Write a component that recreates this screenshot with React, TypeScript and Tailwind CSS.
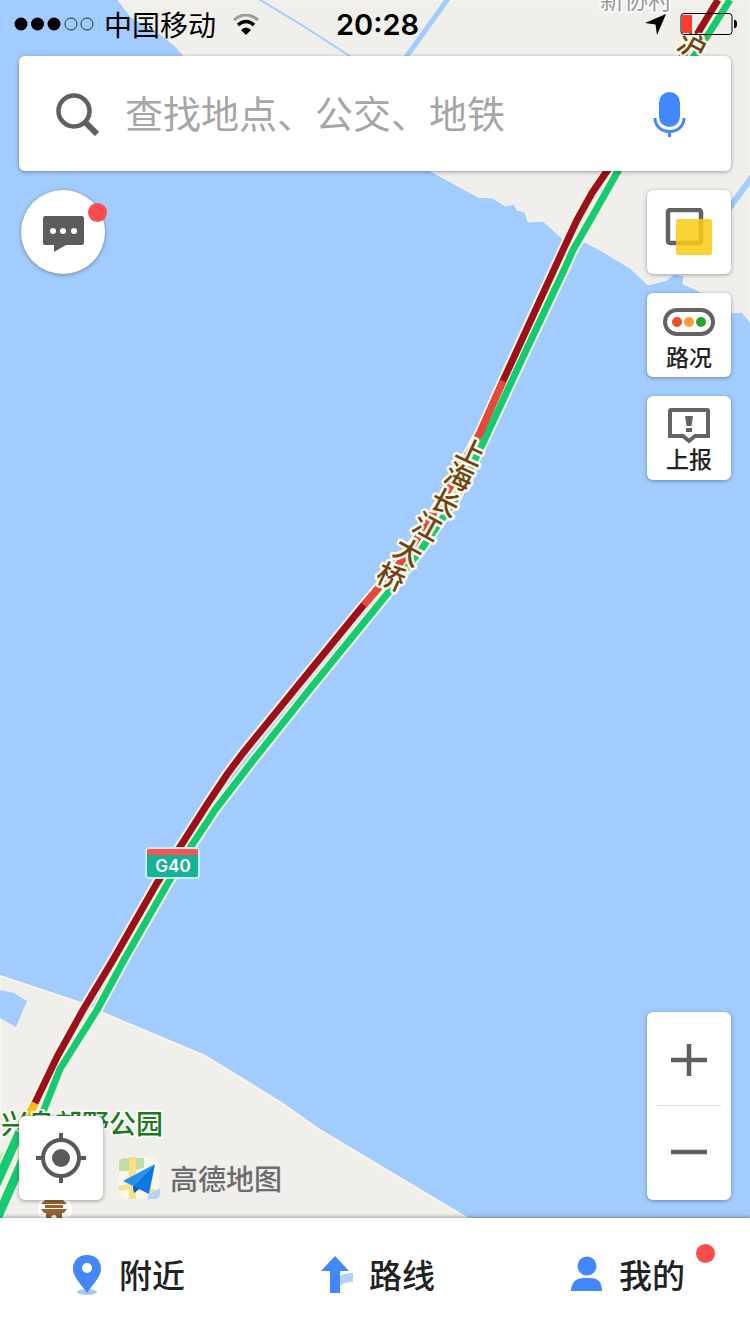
import type { ReactNode } from "react";

const bridgeLabel = [
  { char: "上", x: 471, y: 452, angle: 25 },
  { char: "海", x: 459, y: 477, angle: 25 },
  { char: "长", x: 445, y: 503, angle: 27 },
  { char: "江", x: 427, y: 527, angle: 29 },
  { char: "大", x: 408, y: 552, angle: 29 },
  { char: "桥", x: 391, y: 577, angle: 24 },
];

const redRoad =
  "M718 0 L696 36 L607 171 L592 193 L577 220 L563 250 L503 381 L480 433 L450 487 L423 530 L400 563 L375 592 L362 607 L300 683 L243 753 L228 773 L208 803 L180 847 L157 883 L113 960 L83 1010 L57 1057 L35 1103 L30 1113";
const greenRoad =
  "M730 0 L706 38 L618 171 L588 224 L573 250 L565 268 L523 357 L483 443 L455 500 L423 547 L388 593 L310 689 L255 758 L215 810 L192 845 L168 883 L124 960 L97 1010 L60 1069 L43 1112";

function MapCanvas() {
  return (
    <svg
      className="absolute inset-0 h-full w-full"
      viewBox="0 0 750 1218"
      preserveAspectRatio="xMidYMin slice"
      fontFamily="'Noto Sans CJK SC', sans-serif"
      aria-hidden="true"
    >
      <rect width="750" height="1218" fill="#a2ccfe" />

      {/* north shore */}
      <path
        d="M118 0 L131 17 L160 34 L175 46 L184 56 L260 90 L425 168 L478 197 L493 198 L505 206 L514 204 L517 210 L525 212 L528 222 L543 221 L563 239 L583 241 L600 250 L630 268 L648 285 L667 280 L674 274 L684 276 L683 284 L697 290 L732 313 L742 312 L750 322 V0 Z"
        fill="#f1efeb"
        stroke="#f8f5ea"
        strokeWidth="1"
      />
      {/* south shore */}
      <path
        d="M0 976 L75 1001 L103 1013 L205 1056 L280 1102 L320 1130 L467 1218 H0 Z"
        fill="#f1efeb"
        stroke="#f8f5ea"
        strokeWidth="2"
      />
      <path d="M0 990 L14 993 L27 1001 L16 1027 L0 1018 Z" fill="#a2ccfe" />
      <path d="M0 1154 L6 1150 V1165 L0 1170 Z" fill="#c6e6b4" />

      <g fill="none" stroke="#a2ccfe">
        <path d="M257 -2 L300 24 L356 60" strokeWidth="2" />
        <path d="M450 -4 L404 60" strokeWidth="5" />
        <path d="M754 174 L728 210" strokeWidth="6" />
      </g>

      <text x="600" y="9" fontSize="24" fill="#999" stroke="#fff" strokeWidth="3" paintOrder="stroke">
        新协村
      </text>

      <g fill="none" strokeLinejoin="round">
        <path d={greenRoad} stroke="#f8f5e0" strokeWidth="11" />
        <path d={redRoad} stroke="#f8f5e0" strokeWidth="11" />
        <path d={greenRoad} stroke="#14cb72" strokeWidth="7" />
        <path d={redRoad} stroke="#9b101a" strokeWidth="7" />
        <path
          d="M503 381 L480 433 L450 487 L423 530 L400 563 L375 592 L364 605"
          stroke="#e8483c"
          strokeWidth="7"
        />
        <path d="M35 1103 L28 1117" stroke="#fcbf10" strokeWidth="7" />
        <path d="M26 1118 L-10 1198 M34 1135 L-8 1230" stroke="#f8f5e0" strokeWidth="13" />
        <path d="M26 1118 L-10 1198 M34 1135 L-8 1230" stroke="#14cb72" strokeWidth="9" />
      </g>

      <g
        fontSize="28"
        fontWeight="500"
        fill="#6b4417"
        stroke="#fdf8e8"
        strokeWidth="5"
        strokeLinejoin="round"
        paintOrder="stroke"
        textAnchor="middle"
      >
        <text transform="translate(692 46) rotate(28)" y="10">
          沪
        </text>
        {bridgeLabel.map(({ char, x, y, angle }) => (
          <text key={char} transform={`translate(${x} ${y}) rotate(${angle})`} y="10">
            {char}
          </text>
        ))}
      </g>

      {/* highway shield */}
      <rect x="145" y="847" width="55" height="32" rx="4" fill="#c4eef0" />
      <rect x="147" y="849" width="51" height="28" rx="2" fill="#17b295" />
      <path d="M147 855 V851 Q147 849 149 849 H196 Q198 849 198 851 V855 Z" fill="#fb5351" />
      <text
        x="173"
        y="872"
        fontSize="17"
        fontWeight="600"
        fontFamily="Inter, sans-serif"
        fill="#fff"
        textAnchor="middle"
      >
        G40
      </text>

      <text
        x="163"
        y="1134"
        fontSize="27"
        fontWeight="500"
        fill="#1c7a1c"
        stroke="#fff"
        strokeWidth="3"
        paintOrder="stroke"
        textAnchor="end"
      >
        兴岛郊野公园
      </text>

      {/* temple marker */}
      <circle cx="55" cy="1209" r="17" fill="#fff" />
      <path
        d="M46 1199 H62 L67 1204 H41 Z M45 1205 H63 V1208 H45 Z M41 1209 H67 L64 1213 H44 Z M46 1213 H62 V1220 H57 Q57 1215 54 1215 Q51 1215 51 1220 H46 Z"
        fill="#966234"
      />
    </svg>
  );
}

function StatusBar() {
  return (
    <div className="grid h-12 grid-cols-[1fr_auto_1fr] items-center pl-3.5 pr-[13px] text-black">
      <div className="flex items-center">
        <svg className="h-3.5 w-20" viewBox="0 0 80 14" aria-label="信号">
          <circle cx="7" cy="7" r="6.500" />
          <circle cx="23.500" cy="7" r="6.500" />
          <circle cx="40" cy="7" r="6.500" />
          <g fill="none" stroke="#000" strokeOpacity="0.75">
            <circle cx="57" cy="7" r="6" />
            <circle cx="73" cy="7" r="6" />
          </g>
        </svg>
        <span className="ml-2.5 text-[28px] leading-none">中国移动</span>
        <svg className="ml-4 h-[21px] w-7" viewBox="0 0 28 21" fill="none" aria-label="Wi-Fi">
          <path d="M2 6 Q14 -4 26 6" stroke="#9b9b9b" strokeWidth="3" />
          <path d="M6 11 Q14 4 22 11" stroke="#000" strokeWidth="3.500" />
          <path d="M9 16 Q14 11 19 16 L14 21 Z" fill="#000" />
        </svg>
      </div>
      <span className="pl-1 font-[Inter,sans-serif] text-[29px] leading-none font-semibold">20:28</span>
      <div className="flex items-center justify-end gap-3.5">
        <svg className="h-[21px] w-[21px]" viewBox="0 0 21 21" aria-label="定位服务">
          <path d="M21 0 L12 21 L10.5 10.5 L0 9 Z" />
        </svg>
        <svg className="h-6 w-[57px]" viewBox="0 0 57 24" aria-label="电量低">
          <rect x="1" y="1.5" width="51" height="21" rx="3" fill="none" stroke="#000" />
          <rect x="2" y="3" width="10" height="18" rx="1" fill="#ff3b30" />
          <path d="M54 8 H55 Q57 8 57 12 Q57 16 55 16 H54 Z" />
        </svg>
      </div>
    </div>
  );
}

function SearchBar() {
  return (
    <form className="mx-[19px] mt-2 flex h-[115px] items-center rounded-md bg-white pr-11 pl-9 shadow-[0_1px_4px_rgba(0,0,0,0.35)]">
      <svg className="h-[44px] w-[44px] shrink-0" viewBox="0 0 44 44" fill="none" stroke="#606060">
        <circle cx="19" cy="19" r="15.500" strokeWidth="4.500" />
        <path d="M30 30 L42 42" strokeWidth="6" />
      </svg>
      <input
        type="search"
        aria-label="搜索"
        placeholder="查找地点、公交、地铁"
        className="ml-[26px] min-w-0 flex-1 bg-transparent pb-1 text-[38px] outline-none placeholder:text-[#a6a6a6]"
      />
      <button type="button" aria-label="语音搜索">
        <svg className="h-[46px] w-[36px]" viewBox="0 0 36 46" fill="none">
          <rect x="8" y="1" width="21" height="35" rx="10.500" fill="#4287fc" />
          <path d="M4 27 C4 45 33 45 33 27 M18.500 40 V46" stroke="#4287fc" strokeWidth="3" />
        </svg>
      </button>
    </form>
  );
}

function MapButton({ label, children }: { label: string; children: ReactNode }) {
  return (
    <button
      type="button"
      aria-label={label}
      className="flex h-[84px] w-[84px] flex-col items-center justify-center rounded-md bg-white text-[#222] shadow-[0_1px_4px_rgba(0,0,0,0.35)]"
    >
      {children}
    </button>
  );
}

function SideTools() {
  return (
    <div className="flex flex-col gap-[19px]">
      <MapButton label="图层">
        <svg className="h-12 w-12" viewBox="0 0 48 48">
          <rect x="3" y="2" width="33" height="33" rx="2" fill="none" stroke="#636363" strokeWidth="4.500" />
          <rect x="11" y="11" width="36" height="36" rx="2" fill="#fccb14" fillOpacity="0.85" />
        </svg>
      </MapButton>
      <MapButton label="路况">
        <svg className="mt-2 h-7 w-[52px]" viewBox="0 0 52 28">
          <rect x="2" y="2" width="48" height="24" rx="12" fill="#fff" stroke="#636363" strokeWidth="4" />
          <circle cx="14" cy="14" r="5" fill="#f04a2c" />
          <circle cx="26" cy="14" r="5" fill="#fd9c35" />
          <circle cx="38" cy="14" r="5" fill="#1fa82c" />
        </svg>
        <span className="mt-1.5 text-[23px] leading-7 font-medium">路况</span>
      </MapButton>
      <MapButton label="上报">
        <svg className="mt-1 h-9 w-[42px]" viewBox="0 0 42 36">
          <path
            d="M3 2 H39 Q40 2 40 3 V28 H27 L21 33 L15 28 H2 V3 Q2 2 3 2 Z"
            fill="#fff"
            stroke="#636363"
            strokeWidth="4"
          />
          <path d="M17 8 H25 L23.5 18 H18.5 Z M18 20 H24 V24 H18 Z" fill="#636363" />
        </svg>
        <span className="text-[23px] leading-7 font-medium">上报</span>
      </MapButton>
    </div>
  );
}

function BrandMark() {
  return (
    <div className="flex items-center gap-2.5">
      <svg className="h-11 w-[41px]" viewBox="0 0 41 44" aria-hidden="true">
        <rect x="0" y="1" width="40" height="42" rx="7" fill="#f8f6ef" />
        <path d="M0 15 V7 Q0 2 6 2 H25 V12 Q12 16 0 15 Z" fill="#bddfa6" />
        <path d="M10 1 H17 V43 H10 Z M0 30 L14 27 L41 35 V39 L14 32 L0 35 Z" fill="#fbdf86" />
        <path d="M30 38 L41 32 V37 Q41 43 35 43 H28 Z" fill="#b4d4fa" />
        <path d="M36 8 L4 25 L14 30 Z" fill="#2590f0" />
        <path d="M36 8 L14 30 L15 37 L20 33 L30 38 Z" fill="#0a78e4" />
        <path d="M14 30 L15 37 L20 33 Z" fill="#075cc0" />
      </svg>
      <span className="text-[28px] leading-none font-medium text-[#6c6c70]">高德地图</span>
    </div>
  );
}

function ZoomControl() {
  return (
    <div className="flex w-[84px] flex-col rounded-md bg-white shadow-[0_1px_4px_rgba(0,0,0,0.35)]">
      <button type="button" aria-label="放大" className="flex h-[93px] items-center justify-center pt-0.5">
        <svg className="h-9 w-9" viewBox="0 0 36 36" stroke="#5f5f5f" strokeWidth="4.500">
          <path d="M0 18 H36 M18 2 V34" />
        </svg>
      </button>
      <div className="mx-2.5 h-px bg-[#ddd]" />
      <button type="button" aria-label="缩小" className="flex h-[94px] items-center justify-center pb-0.5">
        <svg className="h-9 w-9" viewBox="0 0 36 36" stroke="#5f5f5f" strokeWidth="4.500">
          <path d="M0 18 H36" />
        </svg>
      </button>
    </div>
  );
}

function NavItem({ label, icon, badge }: { label: string; icon: ReactNode; badge?: boolean }) {
  return (
    <button type="button" className="relative flex items-center justify-center gap-4 pl-1.5">
      <svg className="h-10 w-8" viewBox="0 0 32 40" aria-hidden="true">
        {icon}
      </svg>
      <span className="text-[33px] leading-none font-medium">{label}</span>
      {badge && <span className="absolute top-[26px] right-[35px] h-[19px] w-[19px] rounded-full bg-[#fc4c4c]" />}
    </button>
  );
}

function BottomNav() {
  return (
    <nav className="relative grid h-[113px] grid-cols-3 bg-white text-[#222] shadow-[0_-1px_4px_rgba(0,0,0,0.35)]">
      <NavItem
        label="附近"
        icon={
          <>
            <ellipse cx="16" cy="37" rx="10" ry="3" fill="#a9c6fb" />
            <path
              fillRule="evenodd"
              d="M16 0 C7 0 2 6 2 14 C2 22 10 29 16 38 C22 29 30 22 30 14 C30 6 25 0 16 0 Z M16 8 A5 5 0 1 1 16 18 A5 5 0 1 1 16 8 Z"
              fill="#4287fc"
            />
          </>
        }
      />
      <NavItem
        label="路线"
        icon={
          <>
            <path d="M18 23 Q20 18 32 18 V27 Q23 27 19 31 Z" fill="#b5d0fd" />
            <path d="M14 1 L28 16 H19 V38 H9 V16 H0 Z" fill="#4287fc" />
          </>
        }
      />
      <NavItem
        label="我的"
        badge
        icon={
          <>
            <circle cx="16" cy="11" r="9.500" fill="#4287fc" />
            <path d="M0 36 V34 Q2 23 12 23 H20 Q30 23 31 34 V36 Z" fill="#4287fc" />
          </>
        }
      />
    </nav>
  );
}

export default function App() {
  return (
    <div className="flex min-h-screen flex-col font-['Noto_Sans_CJK_SC',sans-serif]">
      <main className="relative flex flex-1 flex-col overflow-hidden">
        <MapCanvas />
        <div className="relative flex flex-1 flex-col">
          <StatusBar />
          <SearchBar />
          <div className="mx-[19px] mt-[19px] flex items-start justify-between">
            <button
              type="button"
              aria-label="消息"
              className="relative ml-0.5 flex h-[84px] w-[84px] items-center justify-center rounded-full bg-white shadow-[0_1px_4px_rgba(0,0,0,0.35)]"
            >
              <svg className="mt-1 h-[37px] w-[42px]" viewBox="0 0 42 37">
                <path d="M3 0 H40 Q42 0 42 3 V27 Q42 29 40 29 H24 L12 36 V29 H3 Q1 29 1 27 V3 Q1 0 3 0 Z" fill="#5e5b5b" />
                <g fill="#fff">
                  <circle cx="11" cy="15" r="3" />
                  <circle cx="21" cy="15" r="3" />
                  <circle cx="32" cy="15" r="3" />
                </g>
              </svg>
              <span className="absolute top-[13px] -right-0.5 h-[19px] w-[19px] rounded-full bg-[#fc4c4c]" />
            </button>
            <SideTools />
          </div>
          <div className="mx-[19px] mt-auto mb-[18px] flex items-end justify-between">
            <div className="flex items-end gap-4">
              <MapButton label="我的位置">
                <svg className="h-[50px] w-[50px]" viewBox="0 0 50 50">
                  <circle cx="25" cy="25" r="18" fill="none" stroke="#58595b" strokeWidth="4" />
                  <circle cx="25" cy="25" r="9" fill="#58595b" />
                  <path d="M25 0 V9 M25 41 V50 M0 25 H9 M41 25 H50" stroke="#58595b" strokeWidth="4" />
                </svg>
              </MapButton>
              <BrandMark />
            </div>
            <ZoomControl />
          </div>
        </div>
      </main>
      <BottomNav />
    </div>
  );
}
